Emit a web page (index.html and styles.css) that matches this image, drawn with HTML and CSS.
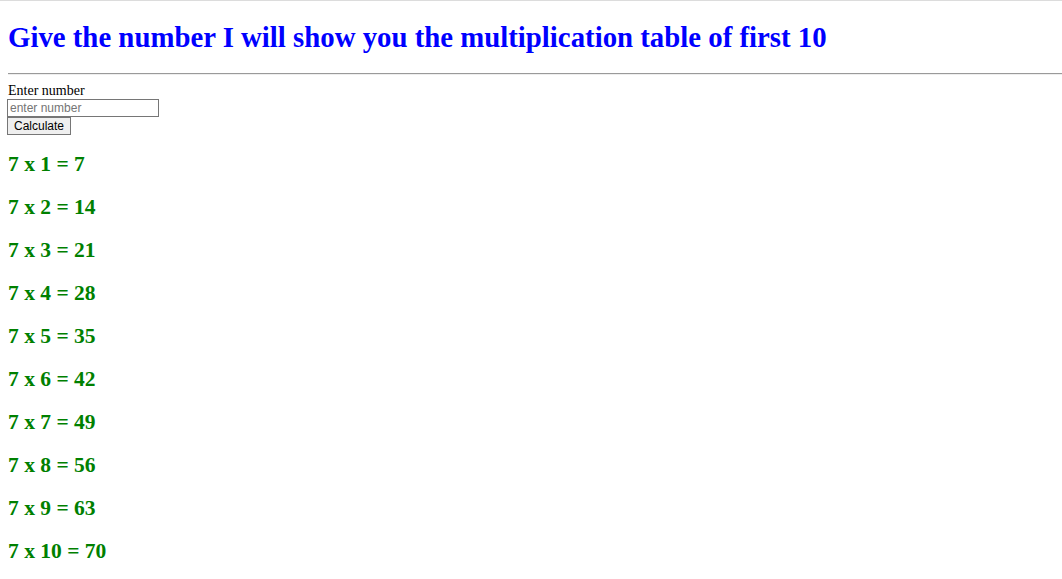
FILE: index.html
```html
<!DOCTYPE html>
<html>
<head>
<meta charset="utf-8">
<link rel="stylesheet" href="styles.css">
</head>
<body>
<div class="page">
<h1 class="title">Give the number I will show you the multiplication table of first 10</h1>
<hr class="rule">
<div class="form">
<label class="label" for="num">Enter number</label>
<input class="field" id="num" type="text" placeholder="enter number">
<button class="btn" type="button">Calculate</button>
</div>
<div class="table">
<h3 class="row">7 x 1 = 7</h3>
<h3 class="row">7 x 2 = 14</h3>
<h3 class="row">7 x 3 = 21</h3>
<h3 class="row">7 x 4 = 28</h3>
<h3 class="row">7 x 5 = 35</h3>
<h3 class="row">7 x 6 = 42</h3>
<h3 class="row">7 x 7 = 49</h3>
<h3 class="row">7 x 8 = 56</h3>
<h3 class="row">7 x 9 = 63</h3>
<h3 class="row">7 x 10 = 70</h3>
</div>
</div>
</body>
</html>
```
FILE: styles.css
```css
html, body {
  margin: 0;
  padding: 0;
}
body {
  font-family: "Liberation Serif", "Times New Roman", serif;
  font-size: 14px;
  color: #000;
  border-top: 1px solid #dcdcdc;
  height: 578px;
  overflow: hidden;
}
.page {
  padding: 8px 0 0 8px;
}
.title {
  color: #0000ff;
  font-size: 28.8px;
  font-weight: bold;
  margin: 12px 0 19px;
  line-height: 33px;
}
.rule {
  box-sizing: border-box;
  width: auto;
  margin: 0 0 8px 0;
  border: 0;
  border-top: 1px solid #9a9a9a;
  border-bottom: 1px solid #eeeeee;
  height: 2px;
}
.form {
  display: flex;
  flex-direction: column;
  align-items: flex-start;
}
.label {
  font-size: 14px;
  line-height: 16px;
}
.field {
  box-sizing: border-box;
  width: 152px;
  height: 18px;
  margin: 0 0 0 -1px;
  padding: 0 2px;
  border: 1px solid #767676;
  font-family: "Liberation Sans", Arial, sans-serif;
  font-size: 12px;
}
.field::placeholder {
  color: #757575;
}
.btn {
  box-sizing: border-box;
  height: 18px;
  margin: 0 0 0 -1px;
  padding: 0 6px;
  border: 1px solid #767676;
  border-radius: 0;
  background: #efefef;
  font-family: "Liberation Sans", Arial, sans-serif;
  font-size: 12px;
  color: #000;
}
.row {
  color: #008000;
  font-size: 21.5px;
  font-weight: bold;
  line-height: 25px;
  margin: 18px 0;
}
.row:first-child {
  margin-top: 17px;
}
```
